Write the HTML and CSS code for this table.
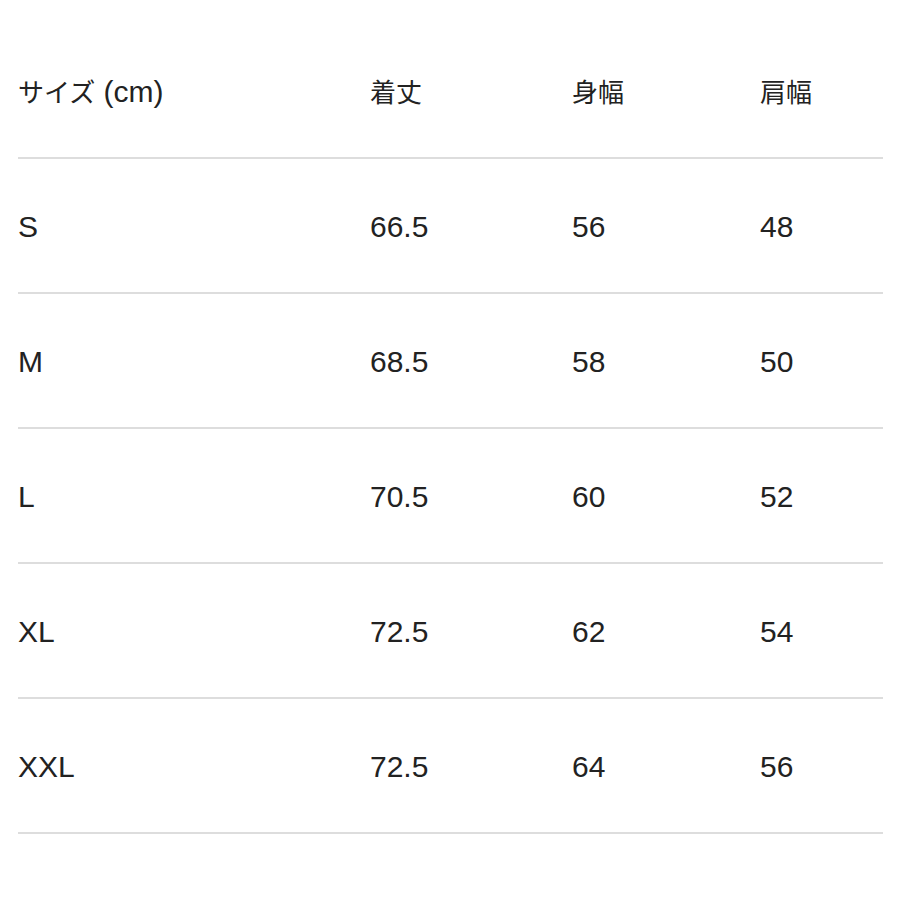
FILE: index.html
```html
<!DOCTYPE html>
<html lang="ja">
<head>
<meta charset="utf-8">
<link rel="stylesheet" href="styles.css">
</head>
<body>
<div class="table">
  <div class="row head"><div class="c1"><span class="jp">サイズ</span> (cm)</div><div class="c2"><span class="jp">着丈</span></div><div class="c3"><span class="jp">身幅</span></div><div class="c4"><span class="jp">肩幅</span></div></div>
  <div class="row"><div class="c1">S</div><div class="c2">66.5</div><div class="c3">56</div><div class="c4">48</div></div>
  <div class="row"><div class="c1">M</div><div class="c2">68.5</div><div class="c3">58</div><div class="c4">50</div></div>
  <div class="row"><div class="c1">L</div><div class="c2">70.5</div><div class="c3">60</div><div class="c4">52</div></div>
  <div class="row"><div class="c1">XL</div><div class="c2">72.5</div><div class="c3">62</div><div class="c4">54</div></div>
  <div class="row"><div class="c1">XXL</div><div class="c2">72.5</div><div class="c3">64</div><div class="c4">56</div></div>
</div>
</body>
</html>
```
FILE: styles.css
```css
html, body {
  margin: 0;
  padding: 0;
  background: #ffffff;
}
body {
  font-family: "Liberation Sans", "Noto Sans CJK JP", sans-serif;
  font-size: 30px;
  color: #222222;
}
.table {
  margin-left: 18px;
  width: 865px;
  padding-top: 24px;
}
.row {
  display: grid;
  grid-template-columns: 352px 202px 188px 1fr;
  align-items: center;
  height: 133px;
  border-bottom: 2px solid #dddddd;
}
.row > div {
  line-height: 34px;
  padding-top: 2px;
}
.jp {
  font-family: "Noto Sans CJK JP", sans-serif;
  font-size: 26px;
}
```
